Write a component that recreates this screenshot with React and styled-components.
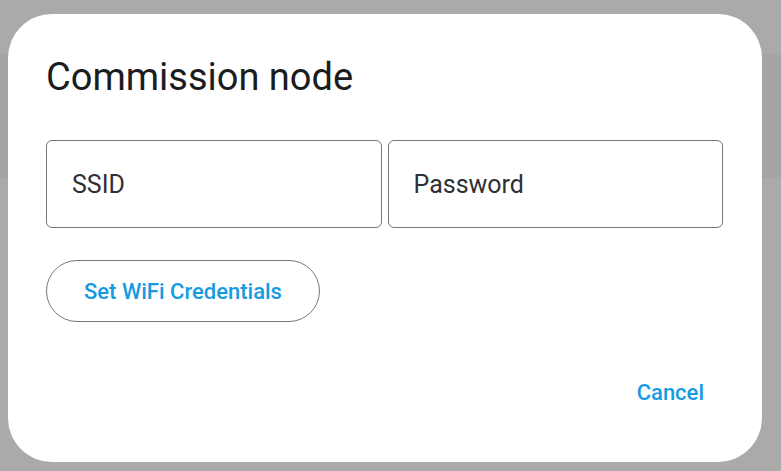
import React from 'react';
import styled, { createGlobalStyle } from 'styled-components';

const GlobalStyle = createGlobalStyle`
  html, body {
    margin: 0;
    padding: 0;
    background: #aaaaaa;
    font-family: Roboto, "Liberation Sans", sans-serif;
  }
`

const Page = styled.div`
  position: relative;
  width: 781px;
  height: 471px;
  overflow: hidden;
  background: #aaaaaa;
`

// app bar dimmed behind the scrim
const AppBar = styled.div`
  margin-top: 54px;
  height: 124px;
  background: #a4a4a4;
`

const Dialog = styled.div`
  position: absolute;
  top: 14px;
  left: 8px;
  width: 754px;
  height: 448px;
  box-sizing: border-box;
  padding: 38px 39px 38px 38px;
  background: #ffffff;
  border-radius: 44px;
  display: flex;
  flex-direction: column;
`

const Title = styled.h2`
  margin: 0 0 37px 0;
  font-size: 38px;
  line-height: 51px;
  font-weight: 400;
  color: #1a1c1e;
`

const Fields = styled.div`
  display: flex;
  gap: 6px;
`

const Field = styled.input`
  flex: 1;
  min-width: 0;
  height: 88px;
  box-sizing: border-box;
  padding: 0 25px;
  border: 1px solid #76777d;
  border-radius: 6px;
  font-family: Roboto, "Liberation Sans", sans-serif;
  font-size: 25px;
  color: #2f3036;
  background: transparent;
  outline: none;

  &::placeholder {
    color: #2f3036;
    opacity: 1;
  }
`

const OutlineButton = styled.button`
  align-self: flex-start;
  margin-top: 32px;
  height: 62px;
  padding: 0 37px;
  border: 1px solid #76777d;
  border-radius: 31px;
  background: transparent;
  font-family: Roboto, "Liberation Sans", sans-serif;
  font-size: 22px;
  font-weight: 500;
  color: #169be2;
  cursor: pointer;
`

const Actions = styled.div`
  margin-top: auto;
  display: flex;
  justify-content: flex-end;
`

const TextButton = styled.button`
  height: 63px;
  padding: 0 19px;
  border: none;
  border-radius: 32px;
  background: transparent;
  font-family: Roboto, "Liberation Sans", sans-serif;
  font-size: 22px;
  font-weight: 500;
  color: #169be2;
  cursor: pointer;
`

function App() {
  return (
    <Page>
      <GlobalStyle />
      <AppBar />
      <Dialog>
        <Title>Commission node</Title>
        <Fields>
          <Field placeholder="SSID" />
          <Field placeholder="Password" type="password" />
        </Fields>
        <OutlineButton>Set WiFi Credentials</OutlineButton>
        <Actions>
          <TextButton>Cancel</TextButton>
        </Actions>
      </Dialog>
    </Page>
  );
}

export default App;
